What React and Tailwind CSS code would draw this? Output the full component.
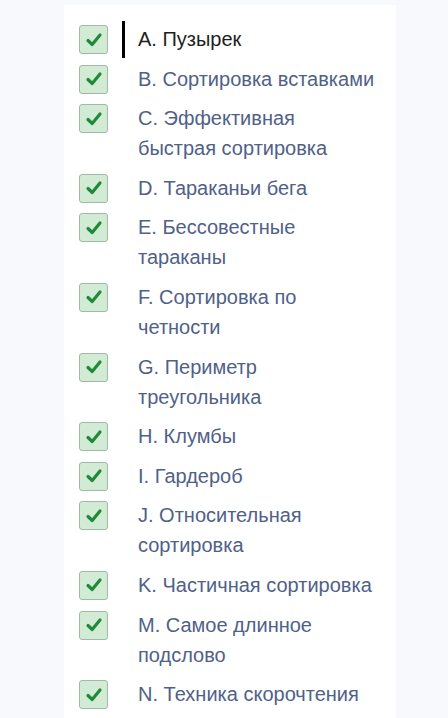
const items = [
  { lines: ['A. Пузырек'], active: true },
  { lines: ['B. Сортировка вставками'] },
  { lines: ['C. Эффективная', 'быстрая сортировка'] },
  { lines: ['D. Тараканьи бега'] },
  { lines: ['E. Бессовестные', 'тараканы'] },
  { lines: ['F. Сортировка по', 'четности'] },
  { lines: ['G. Периметр', 'треугольника'] },
  { lines: ['H. Клумбы'] },
  { lines: ['I. Гардероб'] },
  { lines: ['J. Относительная', 'сортировка'] },
  { lines: ['K. Частичная сортировка'] },
  { lines: ['M. Самое длинное', 'подслово'] },
  { lines: ['N. Техника скорочтения'] },
];

const CheckBox = () => (
  <div className="mt-px w-[29px] h-[29px] shrink-0 rounded-[3px] border border-[#a3b9a5] bg-[#d2ebd4] flex items-center justify-center">
    <svg width="20" height="20" viewBox="0 0 20 20" fill="none">
      <path d="M4 10.5 L8.2 14.5 L16 5" stroke="#1f8a37" strokeWidth="3.2" strokeLinecap="round" strokeLinejoin="round" />
    </svg>
  </div>
);

export default function App() {
  return (
    <div className="min-h-[718px] bg-[#f8f9fc] pt-[5px] font-['Liberation_Sans',Arial,sans-serif]">
      <div className="ml-[64px] w-[332px] min-h-[713px] bg-white pl-[15px] pt-[19px] flex flex-col gap-[9.6px]">
        {items.map((item, i) => (
          <div key={i} className="flex items-start">
            <CheckBox />
            <div className="w-[30px] h-[30px] flex justify-center shrink-0">
              {item.active && <div className="w-[3px] h-[37px] -mt-[3px] shrink-0 bg-black" />}
            </div>
            <div className={`text-[20px] leading-[30px] ${item.active ? 'text-[#1e1e1e]' : 'text-[#506188]'}`}>
              {item.lines.map((l, j) => (
                <div key={j} className="whitespace-nowrap">{l}</div>
              ))}
            </div>
          </div>
        ))}
      </div>
    </div>
  );
}
